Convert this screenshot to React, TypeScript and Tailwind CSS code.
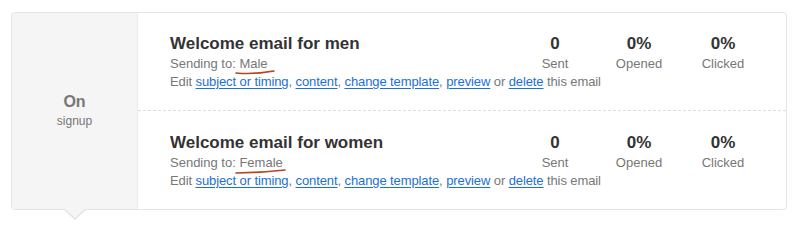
import React from 'react'

type Email = { title: string; audience: string; mark: string }

const emails: Email[] = [
  { title: 'Welcome email for men', audience: 'Male', mark: 'M1 3 C 12 4, 28 3, 39 1' },
  { title: 'Welcome email for women', audience: 'Female', mark: 'M1 4 C 16 4, 34 3, 50 1' },
]

function Stat({ value, label }: { value: string; label: string }) {
  return (
    <div className="w-[84px] shrink-0 text-center">
      <div className="text-[17px] font-bold leading-[20px] text-[#333]">{value}</div>
      <div className="text-[13px] leading-[18px] text-[#777] mt-[1px]">{label}</div>
    </div>
  )
}

function Link({ children }: { children: React.ReactNode }) {
  return <a href="#" className="text-[#1c6fd8] underline underline-offset-[2px]">{children}</a>
}

function EmailRow({ email, last }: { email: Email; last?: boolean }) {
  return (
    <div className={'flex items-start pl-[32px] pr-[21px] ' + (last ? 'pt-[22px] pb-[19px]' : 'pt-[21px] pb-[19px] border-b border-dashed border-[#ddd]')}>
      <div className="flex-1 min-w-0 whitespace-nowrap">
        <div className="text-[17px] font-bold leading-[20px] text-[#333]">{email.title}</div>
        <div className="text-[13px] leading-[18px] text-[#777] mt-[1px]">
          Sending to:{' '}
          <span className="relative">
            {email.audience}
            <svg className="absolute left-[-4px] top-[14px]" width="54" height="6" viewBox="0 0 54 6">
              <path d={email.mark} fill="none" stroke="#b8431f" strokeWidth="1.6" strokeLinecap="round" />
            </svg>
          </span>
        </div>
        <div className="text-[13px] leading-[18px] text-[#777] tracking-[-0.1px]">
          Edit <Link>subject or timing</Link>, <Link>content</Link>, <Link>change template</Link>,{' '}
          <Link>preview</Link> or <Link>delete</Link> this email
        </div>
      </div>
      <Stat value="0" label="Sent" />
      <Stat value="0%" label="Opened" />
      <Stat value="0%" label="Clicked" />
    </div>
  )
}

export default function App() {
  return (
    <div className="w-[800px] h-[228px] bg-white pl-[11px] pt-[12px] font-['Liberation_Sans',Arial,sans-serif]">
      <div className="relative w-[776px] flex border border-[#e4e4e4] rounded-[4px] bg-white">
        <div className="w-[126px] shrink-0 bg-[#f5f5f5] border-r border-[#ebebeb] rounded-l-[4px] flex flex-col items-center justify-center">
          <div className="text-[16px] font-bold leading-[20px] text-[#777] mt-[-2px]">On</div>
          <div className="text-[12px] leading-[16px] text-[#777] mt-[1px]">signup</div>
        </div>
        <div className="flex-1 min-w-0 flex flex-col">
          {emails.map((e, i) => (
            <EmailRow key={i} email={e} last={i === emails.length - 1} />
          ))}
        </div>
        <div className="absolute left-[51px] top-full w-0 h-0 border-l-[12px] border-r-[12px] border-t-[11px] border-l-transparent border-r-transparent border-t-[#e4e4e4]" />
        <div className="absolute left-[52px] top-full mt-[-1px] w-0 h-0 border-l-[11px] border-r-[11px] border-t-[10px] border-l-transparent border-r-transparent border-t-[#f5f5f5]" />
      </div>
    </div>
  )
}
